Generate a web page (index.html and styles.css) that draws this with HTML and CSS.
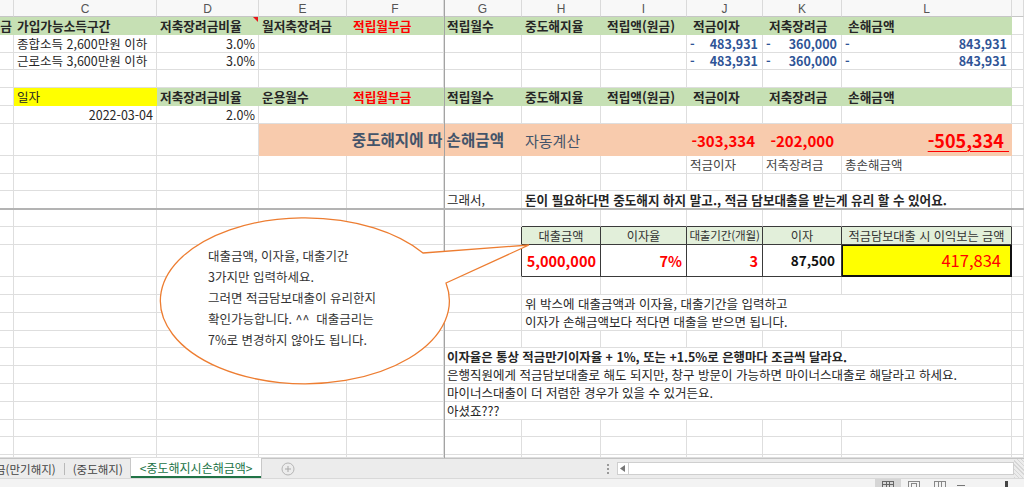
FILE: index.html
```html
<!DOCTYPE html>
<html lang="ko">
<head>
<meta charset="utf-8">
<title>중도해지시손해금액</title>
<link rel="stylesheet" href="styles.css">
</head>
<body>
<div class="app">
  <div class="sheet">
    <!-- column headers -->
    <div class="h"></div><div class="h">C</div><div class="h">D</div><div class="h">E</div><div class="h">F</div><div class="h">G</div><div class="h">H</div><div class="h">I</div><div class="h">J</div><div class="h">K</div><div class="h">L</div><div class="h"></div>

    <!-- row 1 -->
    <div class="c g b end clip">금</div>
    <div class="c g b">가입가능소득구간</div>
    <div class="c g b note">저축장려금비율</div>
    <div class="c g b">월저축장려금</div>
    <div class="c g b red ind">적립월부금</div>
    <div class="c g b">적립월수</div>
    <div class="c g b">중도해지율</div>
    <div class="c g b ind">적립액(원금)</div>
    <div class="c g b ind">적금이자</div>
    <div class="c g b ind">저축장려금</div>
    <div class="c g b ind">손해금액</div>
    <div class="c"></div>

    <!-- row 2 -->
    <div class="c"></div>
    <div class="c">종합소득 2,600만원 이하</div>
    <div class="c end">3.0%</div>
    <div class="c"></div><div class="c"></div><div class="c"></div><div class="c"></div><div class="c"></div>
    <div class="c acc"><span>-</span><span>483,931</span></div>
    <div class="c acc"><span>-</span><span>360,000</span></div>
    <div class="c acc"><span>-</span><span>843,931</span></div>
    <div class="c"></div>

    <!-- row 3 -->
    <div class="c"></div>
    <div class="c">근로소득 3,600만원 이하</div>
    <div class="c end">3.0%</div>
    <div class="c"></div><div class="c"></div><div class="c"></div><div class="c"></div><div class="c"></div>
    <div class="c acc"><span>-</span><span>483,931</span></div>
    <div class="c acc"><span>-</span><span>360,000</span></div>
    <div class="c acc"><span>-</span><span>843,931</span></div>
    <div class="c"></div>

    <!-- row 4 -->
    <div class="c"></div><div class="c"></div><div class="c"></div><div class="c"></div><div class="c"></div><div class="c"></div><div class="c"></div><div class="c"></div><div class="c"></div><div class="c"></div><div class="c"></div><div class="c"></div>

    <!-- row 5 -->
    <div class="c"></div>
    <div class="c y">일자</div>
    <div class="c g b">저축장려금비율</div>
    <div class="c g b">운용월수</div>
    <div class="c g b red ind">적립월부금</div>
    <div class="c g b">적립월수</div>
    <div class="c g b">중도해지율</div>
    <div class="c g b ind">적립액(원금)</div>
    <div class="c g b ind">적금이자</div>
    <div class="c g b ind">저축장려금</div>
    <div class="c g b ind">손해금액</div>
    <div class="c"></div>

    <!-- row 6 -->
    <div class="c"></div>
    <div class="c end">2022-03-04</div>
    <div class="c end">2.0%</div>
    <div class="c"></div><div class="c"></div><div class="c"></div><div class="c"></div><div class="c"></div><div class="c"></div><div class="c"></div><div class="c"></div><div class="c"></div>

    <!-- row 7 -->
    <div class="c"></div><div class="c"></div><div class="c"></div>
    <div class="c o span3 end b slate loss-title">중도해지에 따 손해금액</div>
    <div class="c o big slate">자동계산</div>
    <div class="c o"></div>
    <div class="c o end big b red num-pad">-303,334</div>
    <div class="c o end big b red num-pad">-202,000</div>
    <div class="c o end red total"><span>-505,334&nbsp;</span></div>
    <div class="c"></div>

    <!-- row 8 -->
    <div class="c"></div><div class="c"></div><div class="c"></div><div class="c"></div><div class="c"></div><div class="c"></div><div class="c"></div><div class="c"></div>
    <div class="c grey">적금이자</div>
    <div class="c grey">저축장려금</div>
    <div class="c grey">총손해금액</div>
    <div class="c"></div>

    <!-- row 9 -->
    <div class="c"></div><div class="c"></div><div class="c"></div><div class="c"></div><div class="c"></div><div class="c"></div><div class="c"></div><div class="c"></div><div class="c"></div><div class="c"></div><div class="c"></div><div class="c"></div>

    <!-- row 10 -->
    <div class="c"></div><div class="c"></div><div class="c"></div><div class="c"></div><div class="c"></div>
    <div class="c">그래서,</div>
    <div class="c span5 b">돈이 필요하다면 중도해지 하지 말고., 적금 담보대출을 받는게 유리 할 수 있어요.</div>
    <div class="c"></div>

    <!-- row 11 -->
    <div class="c"></div><div class="c"></div><div class="c"></div><div class="c"></div><div class="c"></div><div class="c"></div>
    <div class="c tt"></div><div class="c tt"></div><div class="c tt"></div><div class="c tt"></div><div class="c tt"></div>
    <div class="c"></div>

    <!-- row 12: table header -->
    <div class="c"></div><div class="c"></div><div class="c"></div><div class="c"></div><div class="c"></div>
    <div class="c tl"></div>
    <div class="c th">대출금액</div>
    <div class="c th">이자율</div>
    <div class="c th narrow">대출기간(개월)</div>
    <div class="c th">이자</div>
    <div class="c th">적금담보대출 시 이익보는 금액</div>
    <div class="c"></div>

    <!-- row 13: table values -->
    <div class="c"></div><div class="c"></div><div class="c"></div><div class="c"></div><div class="c"></div>
    <div class="c tl"></div>
    <div class="c td end b red val">5,000,000</div>
    <div class="c td end b red val">7%</div>
    <div class="c td end b red val">3</div>
    <div class="c td end b val-sm">87,500</div>
    <div class="c td end red result">417,834</div>
    <div class="c"></div>

    <!-- row 14 -->
    <div class="c"></div><div class="c"></div><div class="c"></div><div class="c"></div><div class="c"></div><div class="c"></div><div class="c"></div><div class="c"></div><div class="c"></div><div class="c"></div><div class="c"></div><div class="c"></div>

    <!-- row 15 -->
    <div class="c"></div><div class="c"></div><div class="c"></div><div class="c"></div><div class="c"></div><div class="c"></div>
    <div class="c span5">위 박스에 대출금액과 이자율, 대출기간을 입력하고</div>
    <div class="c"></div>

    <!-- row 16 -->
    <div class="c"></div><div class="c"></div><div class="c"></div><div class="c"></div><div class="c"></div><div class="c"></div>
    <div class="c span5">이자가 손해금액보다 적다면 대출을 받으면 됩니다.</div>
    <div class="c"></div>

    <!-- row 17 -->
    <div class="c"></div><div class="c"></div><div class="c"></div><div class="c"></div><div class="c"></div><div class="c"></div><div class="c"></div><div class="c"></div><div class="c"></div><div class="c"></div><div class="c"></div><div class="c"></div>

    <!-- row 18 -->
    <div class="c"></div><div class="c"></div><div class="c"></div><div class="c"></div><div class="c"></div>
    <div class="c span6 b bold-note">이자율은 통상 적금만기이자율 + 1%, 또는 +1.5%로 은행마다 조금씩 달라요.</div>
    <div class="c"></div>

    <!-- row 19 -->
    <div class="c"></div><div class="c"></div><div class="c"></div><div class="c"></div><div class="c"></div>
    <div class="c span6">은행직원에게 적금담보대출로 해도 되지만, 창구 방문이 가능하면 마이너스대출로 해달라고 하세요.</div>
    <div class="c"></div>

    <!-- row 20 -->
    <div class="c"></div><div class="c"></div><div class="c"></div><div class="c"></div><div class="c"></div>
    <div class="c span6">마이너스대출이 더 저렴한 경우가 있을 수 있거든요.</div>
    <div class="c"></div>

    <!-- row 21 -->
    <div class="c"></div><div class="c"></div><div class="c"></div><div class="c"></div><div class="c"></div>
    <div class="c span6">아셨죠???</div>
    <div class="c"></div>

    <!-- rows 22-24 -->
    <div class="c"></div><div class="c"></div><div class="c"></div><div class="c"></div><div class="c"></div><div class="c"></div><div class="c"></div><div class="c"></div><div class="c"></div><div class="c"></div><div class="c"></div><div class="c"></div>
    <div class="c"></div><div class="c"></div><div class="c"></div><div class="c"></div><div class="c"></div><div class="c"></div><div class="c"></div><div class="c"></div><div class="c"></div><div class="c"></div><div class="c"></div><div class="c"></div>
    <div class="c"></div><div class="c"></div><div class="c"></div><div class="c"></div><div class="c"></div><div class="c"></div><div class="c"></div><div class="c"></div><div class="c"></div><div class="c"></div><div class="c"></div><div class="c"></div>

    <!-- freeze pane lines (drawn over the grid) -->
    <div class="freeze-v"></div>
    <div class="freeze-h"></div>

    <!-- callout shape -->
    <svg class="callout" width="1024" height="458" viewBox="0 0 1024 458">
      <path d="M423 253 L529 245 L446 283 A144.5 83 0 1 1 423 253 Z" fill="#fff" stroke="#ED7D31" stroke-width="1.3" stroke-linejoin="miter"/>
    </svg>
    <div class="callout-text">
      <p>대출금액, 이자율, 대출기간</p>
      <p>3가지만 입력하세요.</p>
      <p>그러면 적금담보대출이 유리한지</p>
      <p>확인가능합니다. ^^&nbsp; 대출금리는</p>
      <p>7%로 변경하지 않아도 됩니다.</p>
    </div>
  </div>

  <div class="tabbar">
    <div class="tabs">
      <div class="tab first">금(만기해지)</div>
      <div class="tab-sep"></div>
      <div class="tab second">(중도해지)</div>
      <div class="tab active">&lt;중도해지시손해금액&gt;</div>
      <div class="tab-add">
        <svg width="14" height="14" viewBox="0 0 14 14"><circle cx="7" cy="7" r="6" fill="none" stroke="#b5b5b5"/><path d="M7 4V10M4 7H10" stroke="#a8a8a8"/></svg>
      </div>
    </div>
    <div class="splitter"><i></i><i></i><i></i></div>
    <div class="hscroll">
      <div class="sbtn"><svg width="6" height="7" viewBox="0 0 6 7"><path d="M5 0V7L0 3.5Z" fill="#777"/></svg></div>
      <div class="strack"></div>
    </div>
    <div class="grip"></div>
  </div>

  <div class="status">
    <div class="views">
      <div class="view on">
        <svg width="14" height="9" viewBox="0 0 14 9"><rect x="1.5" y="2.5" width="11" height="8" fill="none" stroke="#666"/><path d="M1 5.5H13M5.5 2V9M8.5 2V9" stroke="#666"/></svg>
      </div>
      <div class="view">
        <svg width="14" height="9" viewBox="0 0 14 9"><rect x="1.5" y="2.5" width="11" height="8" fill="none" stroke="#888"/><rect x="4.5" y="4.5" width="5" height="5" fill="none" stroke="#888"/></svg>
      </div>
      <div class="view">
        <svg width="14" height="9" viewBox="0 0 14 9"><rect x="1.5" y="2.5" width="11" height="8" fill="none" stroke="#888"/><path d="M5.5 2V9M8.5 2V9" stroke="#888"/></svg>
      </div>
    </div>
    <div class="zoom">
      <span class="minus"></span>
      <span class="thumb"></span>
    </div>
  </div>
</div>
</body>
</html>
```

FILE: styles.css
```css
* { box-sizing: border-box; }

html, body {
  margin: 0;
  padding: 0;
}

body {
  width: 1024px;
  height: 487px;
  overflow: hidden;
  background: #fff;
  font-family: "Noto Sans CJK KR", "Noto Sans", sans-serif;
  color: #262626;
}

.app {
  width: 1024px;
  height: 487px;
  display: flex;
  flex-direction: column;
}

/* ---------- sheet grid ---------- */
.sheet {
  position: relative;
  height: 458px;
  flex: none;
  overflow: hidden;
  display: grid;
  grid-template-columns: 14px 143px 102px 88px 97px 78px 79px 86px 76px 79px 170px 12px;
  grid-template-rows:
    17px 18px 18px 17px 18px 18px 18px 32px 18px 17px 18px
    18px 18px 32px 18px 18px 18px 17px 18px 18px 18px 18px 17px 18px 3px;
  font-size: 12.5px;
}

.h {
  background: #f8f8f8;
  border-right: 1px solid #dadada;
  border-bottom: 1px solid #c6c6c6;
  display: flex;
  align-items: center;
  justify-content: center;
  font-family: "Liberation Sans", Arial, sans-serif;
  font-size: 12px;
  color: #555;
  padding-top: 1px;
}

.c {
  border-right: 1px solid #dedede;
  border-bottom: 1px solid #dedede;
  display: flex;
  align-items: center;
  padding: 1px 3px 0 3px;
  white-space: nowrap;
  overflow: visible;
  min-width: 0;
  line-height: 1;
}

.end { justify-content: flex-end; }
.b { font-weight: 700; font-size: 12.6px; }
.red { color: #ff0000; }
.grey { color: #444; }
.slate { color: #44546a; }
.ind { padding-left: 6px; }
.clip { padding-right: 1px; }
.c.bold-note { font-size: 12.4px; }

.g {
  background: #c6e0b4;
  border-color: #c6e0b4;
}

.g.b { font-size: 12.7px; }

.y {
  background: #ffff00;
  border-color: #ffff00;
}

.o {
  background: #f8cbad;
  border-color: #f8cbad;
}

.span3 { grid-column: span 3; }
.span5 { grid-column: span 5; }
.span6 { grid-column: span 6; }

.note { position: relative; }
.note::after {
  content: "";
  position: absolute;
  top: 0;
  right: 0;
  border-style: solid;
  border-width: 0 5px 5px 0;
  border-color: transparent #e8141a transparent transparent;
}

/* accounting number cells */
.acc {
  justify-content: space-between;
  color: #2f5496;
  font-weight: 700;
  padding-right: 4px;
}

/* orange loss row */
.big { font-size: 15px; }
.c.b.big { font-size: 15px; }
.c.b.loss-title { font-size: 15.6px; padding-right: 17px; }
.num-pad { padding-right: 7px; }
.total {
  font-size: 18px;
  font-weight: 700;
  padding-right: 2px;
}
.total span {
  text-decoration: underline;
  text-decoration-thickness: 1px;
  text-underline-offset: 3px;
}

/* input table */
.tt { border-bottom-color: #3a3a3a; }
.tl { border-right-color: #3a3a3a; }

.th {
  background: #e2efda;
  border-right-color: #3a3a3a;
  border-bottom-color: #3a3a3a;
  justify-content: center;
  color: #333;
  font-size: 12.2px;
}

.c.narrow {
  font-size: 11.6px;
  padding: 1px 0 0 0;
  letter-spacing: -0.2px;
}

.td {
  border-right-color: #3a3a3a;
  border-bottom-color: #3a3a3a;
}

.c.val { font-size: 14.5px; padding-right: 4px; }
.c.val-sm { font-size: 13.5px; padding-right: 6px; color: #111; }

.result {
  background: #ffff00;
  font-size: 16.5px;
  padding-right: 9px;
  border-right: 2px solid #111;
  border-bottom: 2px solid #111;
  box-shadow: inset 1px 1px 0 #111;
}

/* freeze lines */
.freeze-v {
  position: absolute;
  left: 444px;
  top: 0;
  width: 1px;
  height: 458px;
  background: #a3a3a3;
}

.freeze-h {
  position: absolute;
  left: 0;
  top: 208px;
  width: 1024px;
  height: 2px;
  background: #b3b3b3;
}

/* callout */
.callout {
  position: absolute;
  left: 0;
  top: 0;
  pointer-events: none;
}

.callout-text {
  position: absolute;
  left: 208px;
  top: 245px;
  font-size: 12.5px;
  line-height: 21px;
  color: #333;
}

.callout-text p {
  margin: 0;
  white-space: nowrap;
}

/* ---------- sheet tabs ---------- */
.tabbar {
  height: 20px;
  flex: none;
  display: flex;
  align-items: stretch;
  background: #ececec;
  border-top: 1px solid #c4c4c4;
  font-size: 11.5px;
}

.tabs {
  display: flex;
  align-items: stretch;
  width: 598px;
}

.tab {
  display: flex;
  align-items: center;
  color: #444;
  white-space: nowrap;
}

.tab.first {
  margin-left: -5px;
  padding-right: 8px;
}

.tab-sep {
  width: 1px;
  margin: 4px 0 3px;
  background: #b9b9b9;
}

.tab.second {
  padding: 0 8px 0 8px;
}

.tab.active {
  margin-top: -1px;
  padding: 0 9px;
  background: #fff;
  color: #217346;
  font-size: 12px;
  border-bottom: 2px solid #217346;
  box-shadow: 1px 0 0 #c8c8c8, -1px 0 0 #c8c8c8;
}

.tab-add {
  display: flex;
  align-items: center;
  margin-left: 20px;
}

.splitter {
  width: 19px;
  display: flex;
  flex-direction: column;
  align-items: center;
  justify-content: center;
  gap: 2px;
}

.splitter i {
  width: 2px;
  height: 2px;
  background: #9a9a9a;
}

.hscroll {
  flex: 1;
  display: flex;
  align-items: center;
}

.sbtn {
  width: 12px;
  height: 13px;
  background: #fff;
  border: 1px solid #cfcfcf;
  display: flex;
  align-items: center;
  justify-content: center;
}

.strack {
  flex: 1;
  height: 13px;
  background: #fff;
  border: 1px solid #cfcfcf;
  border-left: none;
}

.grip {
  width: 10px;
  background: repeating-linear-gradient(45deg, #d6d6d6 0 1px, #ececec 1px 3px);
}

/* ---------- status bar ---------- */
.status {
  height: 9px;
  flex: none;
  background: #f3f3f3;
  border-top: 1px solid #d9d9d9;
  display: flex;
  justify-content: flex-end;
  align-items: stretch;
  overflow: hidden;
}

.views {
  display: flex;
}

.view {
  width: 26px;
  display: flex;
  justify-content: center;
}

.view.on { background: #d6d6d6; }

.zoom {
  position: relative;
  width: 71px;
}

.minus {
  position: absolute;
  left: 4px;
  top: 6px;
  width: 8px;
  height: 1px;
  background: #777;
}

.thumb {
  position: absolute;
  left: 52px;
  top: 2px;
  width: 3px;
  height: 8px;
  background: #444;
}
```
